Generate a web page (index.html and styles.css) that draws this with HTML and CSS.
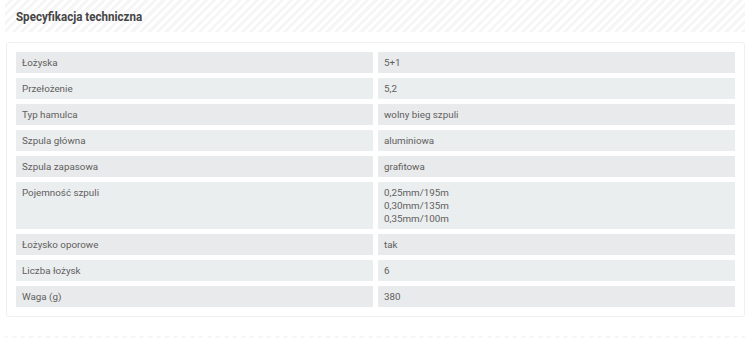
FILE: index.html
```html
<!DOCTYPE html>
<html lang="pl">
<head>
<meta charset="utf-8">
<title>Specyfikacja techniczna</title>
<link rel="stylesheet" href="styles.css">
</head>
<body>
<div class="page">
  <div class="section-head"><h2 class="section-title">Specyfikacja techniczna</h2></div>
  <div class="card">
    <div class="spec">
      <div class="cell">Łożyska</div><div class="cell">5+1</div>
      <div class="cell">Przełożenie</div><div class="cell">5,2</div>
      <div class="cell">Typ hamulca</div><div class="cell">wolny bieg szpuli</div>
      <div class="cell">Szpula główna</div><div class="cell">aluminiowa</div>
      <div class="cell">Szpula zapasowa</div><div class="cell">grafitowa</div>
      <div class="cell">Pojemność szpuli</div><div class="cell">0,25mm/195m<br>0,30mm/135m<br>0,35mm/100m</div>
      <div class="cell">Łożysko oporowe</div><div class="cell">tak</div>
      <div class="cell">Liczba łożysk</div><div class="cell">6</div>
      <div class="cell">Waga (g)</div><div class="cell">380</div>
    </div>
  </div>
  <div class="section-head next"></div>
</div>
</body>
</html>
```
FILE: styles.css
```css
html, body {
  margin: 0;
  padding: 0;
  background: #fff;
}
.page {
  padding: 0 5px;
  font-family: Roboto, "Liberation Sans", sans-serif;
}
.section-head {
  height: 32px;
  display: flex;
  align-items: center;
  padding-left: 11px;
  background: repeating-linear-gradient(-45deg, #f6f6f6 0 3px, #ffffff 3px 6px);
}
.section-title {
  margin: 0;
  font-size: 13px;
  font-weight: 700;
  color: #454545;
  transform: scaleX(0.89);
  transform-origin: left center;
  white-space: nowrap;
}
.card {
  margin: 10px 0 19px 1px;
  border: 1px solid #efefef;
  border-radius: 3px;
  padding: 9px;
}
.spec {
  display: grid;
  grid-template-columns: 1fr 1fr;
  gap: 5px;
}
.cell {
  background: #e9eaeb;
  color: #606060;
  font-size: 9.8px;
  line-height: 13px;
  padding: 4px 6px;
}
.cell:nth-child(4n+3), .cell:nth-child(4n+4) {
  background: #ebeeef;
}
.section-head.next {
  height: 2px;
}
```
